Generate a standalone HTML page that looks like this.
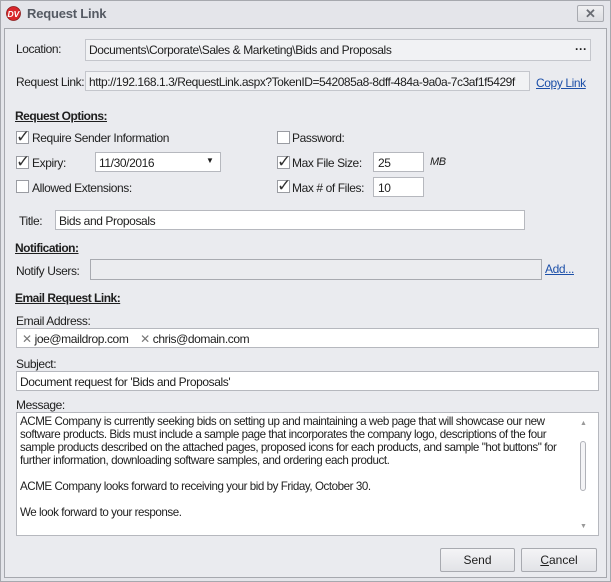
<!DOCTYPE html>
<html><head><style>
*{margin:0;padding:0;box-sizing:border-box}
body{width:611px;height:582px;overflow:hidden;background:#d9dadf;font-family:"Liberation Sans",sans-serif;font-size:12px;color:#1e1e1e;position:relative}
.frame{position:absolute;left:0;top:0;width:611px;height:582px;border:1px solid #a6a8ae;background:#e4e5ea}
.content{position:absolute;left:4px;top:28px;width:603px;height:550px;border:1px solid #a6a8ae;background:#eaebef}
.a{position:absolute;white-space:nowrap;letter-spacing:-0.4px}
.box{position:absolute;background:#fff;border:1px solid #b6b8be}
.lnk{color:#1c4fa8;text-decoration:underline}
.h{font-weight:bold;text-decoration:underline;letter-spacing:-0.5px}
.cb{position:absolute;width:13px;height:13px;border:1px solid #9a9ca2;background:#fff}
.ck{position:absolute;font-size:17px;line-height:13px;color:#333;letter-spacing:0}
.btn{position:absolute;border:1px solid #a8aab0;border-radius:2px;background:linear-gradient(#f4f4f6,#e2e3e7);text-align:center;line-height:22px}
</style></head><body>
<div class="frame"></div>
<svg style="position:absolute;left:6px;top:6px" width="15" height="15" viewBox="0 0 15 15"><circle cx="7.5" cy="7.5" r="7" fill="#d9262b" stroke="#8a1a1a" stroke-width="0.8"/><text x="1.5" y="11" font-family="Liberation Sans" font-weight="bold" font-style="italic" font-size="8.5" fill="#fff">DV</text></svg>
<div class="a" style="left:27px;top:6px;font-weight:bold;font-size:13px;color:#555a63;letter-spacing:-0.2px">Request Link</div>
<div style="position:absolute;left:577px;top:5px;width:27px;height:17px;border:1px solid #a8aab0;border-radius:2px;background:linear-gradient(#f0f0f2,#dcdde1);text-align:center;font-weight:bold;font-size:13px;line-height:15px;color:#6a6d74">✕</div>
<div class="content"></div>

<div class="a" style="left:16px;top:42px">Location:</div>
<div class="box" style="left:85px;top:39px;width:506px;height:22px;background:#f1f2f4;border-color:#c4c6cc"></div>
<div class="a" style="left:89px;top:43px">Documents\Corporate\Sales &amp; Marketing\Bids and Proposals</div>
<div class="a" style="left:575px;top:42px;font-weight:bold;letter-spacing:0">···</div>

<div class="a" style="left:16px;top:75px">Request Link:</div>
<div class="box" style="left:85px;top:71px;width:445px;height:20px;background:#f1f2f4;border-color:#c4c6cc"></div>
<div class="a" style="left:89px;top:75px;letter-spacing:-0.45px">http://192.168.1.3/RequestLink.aspx?TokenID=542085a8-8dff-484a-9a0a-7c3af1f5429f</div>
<div class="a lnk" style="left:536px;top:76px">Copy Link</div>

<div class="a h" style="left:15px;top:109px">Request Options:</div>

<div class="cb" style="left:16px;top:131px"></div><div class="ck" style="left:16px;top:130px">✓</div>
<div class="a" style="left:32px;top:131px">Require Sender Information</div>
<div class="cb" style="left:277px;top:131px"></div>
<div class="a" style="left:292px;top:131px">Password:</div>

<div class="cb" style="left:16px;top:156px"></div><div class="ck" style="left:16px;top:155px">✓</div>
<div class="a" style="left:32px;top:156px">Expiry:</div>
<div class="box" style="left:95px;top:152px;width:126px;height:20px"></div>
<div class="a" style="left:99px;top:156px">11/30/2016</div>
<div class="a" style="left:206px;top:156px;font-size:8px">▼</div>
<div class="cb" style="left:277px;top:156px"></div><div class="ck" style="left:277px;top:155px">✓</div>
<div class="a" style="left:292px;top:156px">Max File Size:</div>
<div class="box" style="left:373px;top:152px;width:51px;height:20px"></div>
<div class="a" style="left:378px;top:156px">25</div>
<div class="a" style="left:430px;top:156px;font-style:italic;font-size:11px">MB</div>

<div class="cb" style="left:16px;top:180px"></div>
<div class="a" style="left:32px;top:181px">Allowed Extensions:</div>
<div class="cb" style="left:277px;top:180px"></div><div class="ck" style="left:277px;top:179px">✓</div>
<div class="a" style="left:292px;top:181px">Max # of Files:</div>
<div class="box" style="left:373px;top:177px;width:51px;height:20px"></div>
<div class="a" style="left:378px;top:181px">10</div>

<div class="a" style="left:19px;top:214px">Title:</div>
<div class="box" style="left:55px;top:210px;width:470px;height:20px"></div>
<div class="a" style="left:59px;top:214px">Bids and Proposals</div>

<div class="a h" style="left:15px;top:241px">Notification:</div>
<div class="a" style="left:16px;top:264px">Notify Users:</div>
<div class="box" style="left:90px;top:259px;width:452px;height:21px;background:#ebecef;border-color:#a8aab0"></div>
<div class="a lnk" style="left:545px;top:262px">Add...</div>

<div class="a h" style="left:15px;top:291px">Email Request Link:</div>
<div class="a" style="left:16px;top:314px">Email Address:</div>
<div class="box" style="left:16px;top:328px;width:583px;height:20px"></div>
<div class="a" style="left:22px;top:332px"><span style="color:#777">✕</span> joe@maildrop.com &nbsp;&nbsp; <span style="color:#777">✕</span> chris@domain.com</div>

<div class="a" style="left:16px;top:357px">Subject:</div>
<div class="box" style="left:16px;top:371px;width:583px;height:20px"></div>
<div class="a" style="left:20px;top:375px">Document request for 'Bids and Proposals'</div>

<div class="a" style="left:16px;top:398px">Message:</div>
<div class="box" style="left:16px;top:412px;width:583px;height:124px"></div>
<div class="a" style="left:20px;top:415px;line-height:13px;font-size:11.6px;letter-spacing:-0.45px">ACME Company is currently seeking bids on setting up and maintaining a web page that will showcase our new<br>software products. Bids must include a sample page that incorporates the company logo, descriptions of the four<br>sample products described on the attached pages, proposed icons for each products, and sample "hot buttons" for<br>further information, downloading software samples, and ordering each product.<br><br>ACME Company looks forward to receiving your bid by Friday, October 30.<br><br>We look forward to your response.</div>
<div class="a" style="left:580px;top:420px;font-size:7px;color:#999">▲</div>
<div style="position:absolute;left:580px;top:441px;width:6px;height:50px;border:1px solid #b0b2b8;border-radius:3px;background:#f4f4f6"></div>
<div class="a" style="left:580px;top:523px;font-size:7px;color:#999">▼</div>

<div class="btn" style="left:440px;top:548px;width:75px;height:24px">Send</div>
<div class="btn" style="left:521px;top:548px;width:76px;height:24px"><u>C</u>ancel</div>
</body></html>
